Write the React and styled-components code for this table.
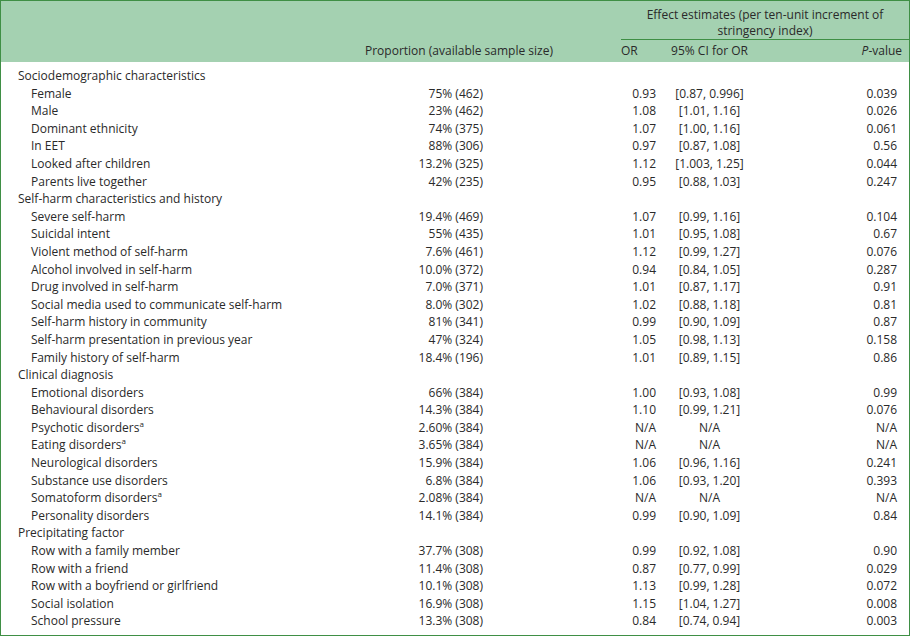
import React from 'react';
import styled, { createGlobalStyle } from 'styled-components';

const GlobalStyle = createGlobalStyle`
html, body {
    margin: 0;
    padding: 0;
    background: #ffffff;
}
`;

const Frame = styled.div`
width: 910px;
height: 636px;
box-sizing: border-box;
border: 1px solid #3f8f45;
background: #ffffff;
overflow: hidden;
font-family: "Open Sans", "Liberation Sans", sans-serif;
font-size: 12px;
color: #2a2a2a;
`;

const Table = styled.table`
width: 908px;
border-collapse: collapse;
table-layout: fixed;

thead {
    background: #a4d1b1;
}
`;

const HeadCell = styled.th`
font-weight: normal;
padding: 0;
height: ${p => p.$h || 22}px;
text-align: ${p => p.$align || 'left'};
vertical-align: ${p => p.$valign || 'bottom'};
padding-left: ${p => p.$pl || 0}px;
padding-right: ${p => p.$pr || 0}px;
padding-bottom: ${p => p.$pb || 0}px;
line-height: 16px;
white-space: ${p => (p.$wrap ? 'normal' : 'nowrap')};
`;

const GroupHead = styled.div`
box-sizing: border-box;
height: 39px;
padding: 6px 4px 0;
border-bottom: 1px solid #3f8f45;
`;

const Row = styled.tr`
height: 17.6px;
&:first-child td {
    padding-top: 5px;
}
`;

const Cell = styled.td`
padding: 0;
white-space: nowrap;
line-height: 17.6px;
text-align: ${p => p.$align || 'left'};
padding-left: ${p => p.$pl || 0}px;
padding-right: ${p => p.$pr || 0}px;
`;

const Sup = styled.sup`
font-size: 8px;
vertical-align: 5px;
line-height: 0;
`;

const rows = [
    ['g', 'Sociodemographic characteristics'],
    ['Female', '75% (462)', '0.93', '[0.87, 0.996]', '0.039'],
    ['Male', '23% (462)', '1.08', '[1.01, 1.16]', '0.026'],
    ['Dominant ethnicity', '74% (375)', '1.07', '[1.00, 1.16]', '0.061'],
    ['In EET', '88% (306)', '0.97', '[0.87, 1.08]', '0.56'],
    ['Looked after children', '13.2% (325)', '1.12', '[1.003, 1.25]', '0.044'],
    ['Parents live together', '42% (235)', '0.95', '[0.88, 1.03]', '0.247'],
    ['g', 'Self-harm characteristics and history'],
    ['Severe self-harm', '19.4% (469)', '1.07', '[0.99, 1.16]', '0.104'],
    ['Suicidal intent', '55% (435)', '1.01', '[0.95, 1.08]', '0.67'],
    ['Violent method of self-harm', '7.6% (461)', '1.12', '[0.99, 1.27]', '0.076'],
    ['Alcohol involved in self-harm', '10.0% (372)', '0.94', '[0.84, 1.05]', '0.287'],
    ['Drug involved in self-harm', '7.0% (371)', '1.01', '[0.87, 1.17]', '0.91'],
    ['Social media used to communicate self-harm', '8.0% (302)', '1.02', '[0.88, 1.18]', '0.81'],
    ['Self-harm history in community', '81% (341)', '0.99', '[0.90, 1.09]', '0.87'],
    ['Self-harm presentation in previous year', '47% (324)', '1.05', '[0.98, 1.13]', '0.158'],
    ['Family history of self-harm', '18.4% (196)', '1.01', '[0.89, 1.15]', '0.86'],
    ['g', 'Clinical diagnosis'],
    ['Emotional disorders', '66% (384)', '1.00', '[0.93, 1.08]', '0.99'],
    ['Behavioural disorders', '14.3% (384)', '1.10', '[0.99, 1.21]', '0.076'],
    ['Psychotic disorders', '2.60% (384)', 'N/A', 'N/A', 'N/A', true],
    ['Eating disorders', '3.65% (384)', 'N/A', 'N/A', 'N/A', true],
    ['Neurological disorders', '15.9% (384)', '1.06', '[0.96, 1.16]', '0.241'],
    ['Substance use disorders', '6.8% (384)', '1.06', '[0.93, 1.20]', '0.393'],
    ['Somatoform disorders', '2.08% (384)', 'N/A', 'N/A', 'N/A', true],
    ['Personality disorders', '14.1% (384)', '0.99', '[0.90, 1.09]', '0.84'],
    ['g', 'Precipitating factor'],
    ['Row with a family member', '37.7% (308)', '0.99', '[0.92, 1.08]', '0.90'],
    ['Row with a friend', '11.4% (308)', '0.87', '[0.77, 0.99]', '0.029'],
    ['Row with a boyfriend or girlfriend', '10.1% (308)', '1.13', '[0.99, 1.28]', '0.072'],
    ['Social isolation', '16.9% (308)', '1.15', '[1.04, 1.27]', '0.008'],
    ['School pressure', '13.3% (308)', '0.84', '[0.74, 0.94]', '0.003'],
];

const App = () => {
    return (
        <>
            <GlobalStyle />
            <Frame>
                <Table>
                    <colgroup>
                        <col style={{ width: 330 }} />
                        <col style={{ width: 286 }} />
                        <col style={{ width: 45 }} />
                        <col style={{ width: 95 }} />
                        <col style={{ width: 152 }} />
                    </colgroup>
                    <thead>
                        <tr>
                            <HeadCell $h={39} />
                            <HeadCell $h={39} />
                            <HeadCell colSpan={3} $h={39} $align="center" $valign="top" $pl={4} $wrap>
                                <GroupHead>Effect estimates (per ten-unit increment of stringency index)</GroupHead>
                            </HeadCell>
                        </tr>
                        <tr>
                            <HeadCell $h={19} />
                            <HeadCell $h={19} $align="right" $pr={64} $pb={3}>Proportion (available sample size)</HeadCell>
                            <HeadCell $h={19} $pl={4} $pb={3}>OR</HeadCell>
                            <HeadCell $h={19} $align="center" $pb={3}>95% CI for OR</HeadCell>
                            <HeadCell $h={19} $align="right" $pr={7} $pb={3}><i>P</i>-value</HeadCell>
                        </tr>
                    </thead>
                    <tbody>
                        {rows.map((r, i) =>
                            r[0] === 'g' ? (
                                <Row key={i}>
                                    <Cell $pl={17}>{r[1]}</Cell>
                                    <Cell />
                                    <Cell />
                                    <Cell />
                                    <Cell />
                                </Row>
                            ) : (
                                <Row key={i}>
                                    <Cell $pl={30}>
                                        {r[0]}
                                        {r[5] && <Sup>a</Sup>}
                                    </Cell>
                                    <Cell $align="right" $pr={134}>{r[1]}</Cell>
                                    <Cell $align="right" $pr={6}>{r[2]}</Cell>
                                    <Cell $align="center">{r[3]}</Cell>
                                    <Cell $align="right" $pr={12}>{r[4]}</Cell>
                                </Row>
                            )
                        )}
                    </tbody>
                </Table>
            </Frame>
        </>
    );
};

export default App;
